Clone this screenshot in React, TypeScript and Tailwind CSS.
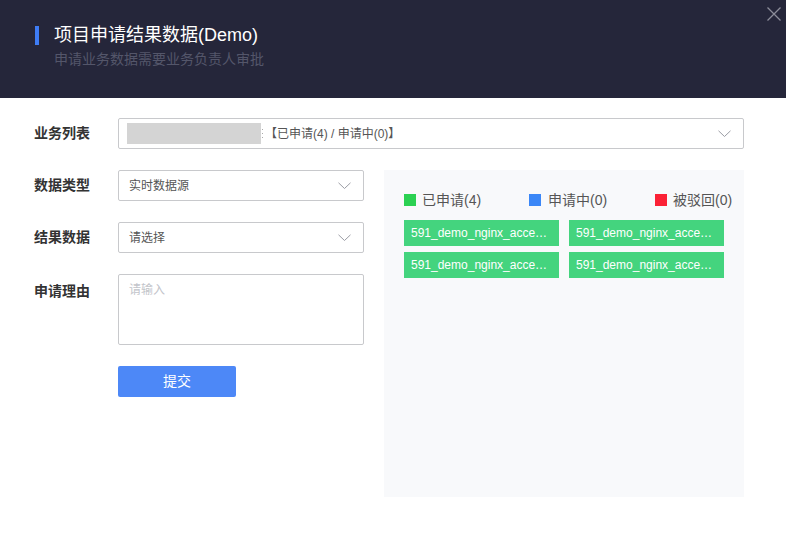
import React from "react";

const font = { fontFamily: '"Liberation Sans", "Noto Sans CJK SC", sans-serif' };

function Chevron() {
  return (
    <svg width="13" height="8" viewBox="0 0 13 8" className="shrink-0">
      <polyline points="0.5,0.8 6.5,6.5 12.5,0.8" fill="none" stroke="#9a9ca4" strokeWidth="1" />
    </svg>
  );
}

function Select({ text, children, pl = "pl-[10px]" }: { text?: string; children?: React.ReactNode; pl?: string }) {
  return (
    <div className={`flex h-[31px] items-center justify-between rounded-[2px] border border-[#c8c9cc] bg-white pr-[12px] ${pl}`}>
      <div className="flex items-center text-[12px] text-[#555]">{children ?? text}</div>
      <Chevron />
    </div>
  );
}

function Tag() {
  return (
    <div className="flex h-[26px] w-[155px] items-center bg-[#44d47e] pl-[7px] pr-[4px] text-[12px] text-white">
      <span className="whitespace-nowrap">591_demo_nginx_acce…</span>
    </div>
  );
}

export default function App() {
  return (
    <div className="h-[539px] w-[786px] bg-white" style={font}>
      <div className="relative h-[98px] bg-[#25263a] pl-[35px] pt-[25px]">
        <div className="flex items-center">
          <div className="h-[19px] w-[4px] bg-[#3e7cf5]" />
          <div className="ml-[15px] text-[18px] leading-[20px] text-white">项目申请结果数据(Demo)</div>
        </div>
        <div className="ml-[19px] mt-[5px] text-[14px] leading-[18px] text-[#54566a]">申请业务数据需要业务负责人审批</div>
        <div className="absolute right-[5px] top-[7px]">
          <svg width="14" height="14" viewBox="0 0 14 14">
            <path d="M0.5 0.5 L13.5 13.5 M13.5 0.5 L0.5 13.5" stroke="#8c8d9a" strokeWidth="1.3" />
          </svg>
        </div>
      </div>

      <div className="pl-[34px] pr-[42px] pt-[20px]">
        <div className="flex items-center">
          <div className="w-[84px] text-[14px] font-semibold text-[#333]">业务列表</div>
          <div className="flex-1">
            <Select pl="pl-[8px]">
              <div className="h-[21px] w-[134px] bg-[#d4d4d4]" />
              <div className="ml-[1px] flex h-[9px] w-[1px] flex-col justify-between">
                <div className="h-[1px] w-[1px] bg-[#aaa]" />
                <div className="h-[1px] w-[1px] bg-[#aaa]" />
                <div className="h-[1px] w-[1px] bg-[#aaa]" />
              </div>
              <span className="ml-[2px]">【已申请(4) / 申请中(0)】</span>
            </Select>
          </div>
        </div>

        <div className="mt-[21px] flex">
          <div className="w-[330px]">
            <div className="flex items-center">
              <div className="w-[84px] text-[14px] font-semibold text-[#333]">数据类型</div>
              <div className="w-[246px]"><Select text="实时数据源" /></div>
            </div>
            <div className="mt-[21px] flex items-center">
              <div className="w-[84px] text-[14px] font-semibold text-[#333]">结果数据</div>
              <div className="w-[246px]"><Select text="请选择" /></div>
            </div>
            <div className="mt-[21px] flex items-start">
              <div className="w-[84px] pt-[7px] text-[14px] font-semibold text-[#333]">申请理由</div>
              <div className="h-[71px] w-[246px] rounded-[2px] border border-[#c8c9cc] px-[10px] pt-[6px] text-[12px] text-[#c2c4ca]">请输入</div>
            </div>
            <div className="ml-[84px] mt-[21px] flex h-[31px] w-[118px] items-center justify-center rounded-[2px] bg-[#4d88f7] text-[14px] text-white">
              提交
            </div>
          </div>

          <div className="ml-[20px] h-[327px] flex-1 bg-[#f8f9fb] pl-[20px] pt-[20px]">
            <div className="flex h-[20px] items-center text-[14px] text-[#555]">
              <div className="flex w-[125px] items-center">
                <div className="h-[12px] w-[12px] bg-[#2bd152]" />
                <span className="ml-[6px]">已申请(4)</span>
              </div>
              <div className="flex w-[126px] items-center">
                <div className="h-[12px] w-[12px] bg-[#3b87f7]" />
                <span className="ml-[7px]">申请中(0)</span>
              </div>
              <div className="flex items-center">
                <div className="h-[12px] w-[12px] bg-[#fb2236]" />
                <span className="ml-[6px]">被驳回(0)</span>
              </div>
            </div>
            <div className="mt-[10px] grid w-[320px] grid-cols-[155px_155px] gap-x-[10px] gap-y-[6px]">
              <Tag />
              <Tag />
              <Tag />
              <Tag />
            </div>
          </div>
        </div>
      </div>
    </div>
  );
}
